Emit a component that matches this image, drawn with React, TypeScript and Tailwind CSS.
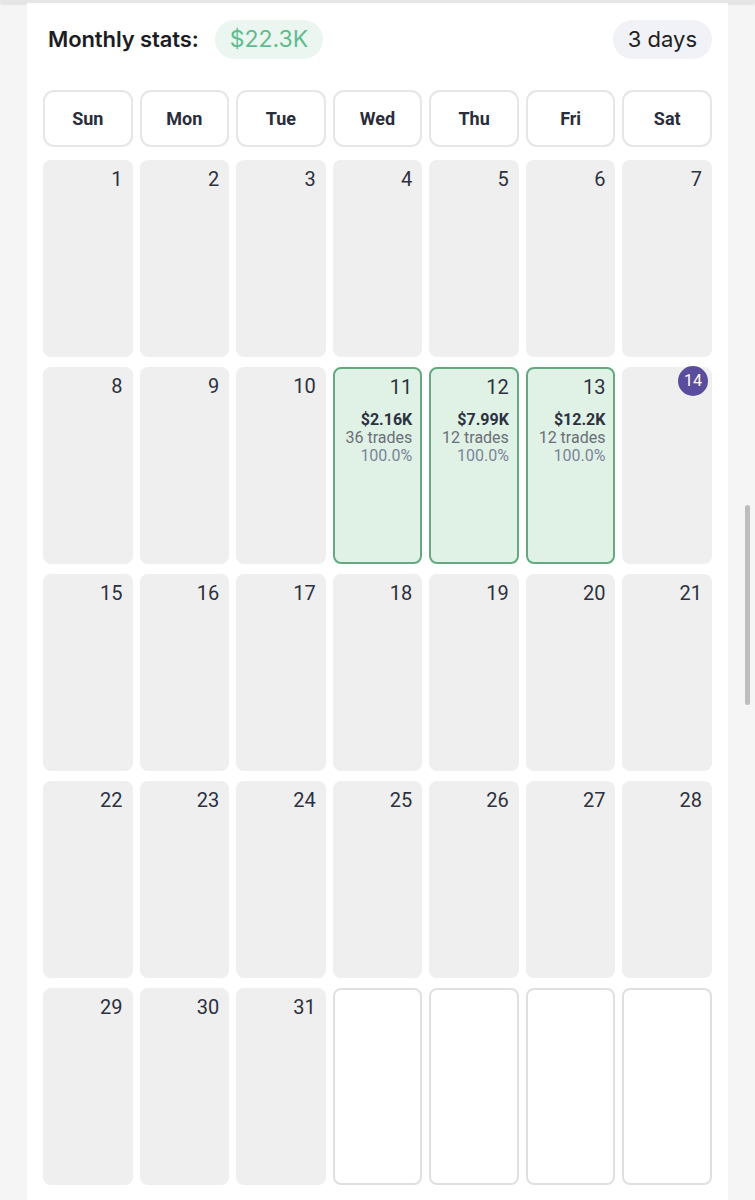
const DAYS = ['Sun', 'Mon', 'Tue', 'Wed', 'Thu', 'Fri', 'Sat']

type Stat = { pnl: string; trades: string; pct: string }

const STATS: Record<number, Stat> = {
  11: { pnl: '$2.16K', trades: '36 trades', pct: '100.0%' },
  12: { pnl: '$7.99K', trades: '12 trades', pct: '100.0%' },
  13: { pnl: '$12.2K', trades: '12 trades', pct: '100.0%' },
}

const TODAY = 14

export default function App() {
  const cells: (number | null)[] = []
  for (let d = 1; d <= 31; d++) cells.push(d)
  while (cells.length < 35) cells.push(null)

  return (
    <div className="relative h-[1200px] overflow-hidden bg-[#f5f5f5] font-['Roboto',sans-serif]">
      {/* top shadow strip */}
      <div className="h-[3px] bg-[#e6e6e6] shadow-[0_1px_3px_rgba(0,0,0,0.12)]" />

      <div className="mx-[27px] h-full bg-white px-4">
        {/* Header */}
        <div className="flex items-center justify-between pt-[17px] font-['Inter',sans-serif]">
          <div className="flex items-center gap-[16px] pl-[5px]">
            <h2 className="text-[22px] font-semibold tracking-[-0.1px] text-[#1c1d24]">Monthly stats:</h2>
            <span className="rounded-full bg-[#eaf6ef] px-[15px] py-[2px] text-[23px] text-[#62bb8f]">$22.3K</span>
          </div>
          <span className="rounded-full bg-[#f1f1f8] px-[15px] py-[3px] text-[22px] text-[#222]">3 days</span>
        </div>

        {/* Weekday labels */}
        <div className="mt-[31px] grid grid-cols-7 gap-x-[7px]">
          {DAYS.map((d) => (
            <div
              key={d}
              className="flex h-[57px] items-center justify-center rounded-[11px] border-2 border-[#e6e6e6] text-[18px] font-bold text-[#2a2d3a]"
            >
              {d}
            </div>
          ))}
        </div>

        {/* Days */}
        <div className="mt-[13px] grid grid-cols-7 gap-x-[7px] gap-y-[10px]">
          {cells.map((d, i) => {
            if (d === null) {
              return <div key={i} className="h-[197px] rounded-[8px] border-2 border-[#e0e0e0] bg-white" />
            }
            const s = STATS[d]
            if (s) {
              return (
                <div
                  key={i}
                  className="flex h-[197px] flex-col items-end rounded-[8px] border-2 border-[#64a982] bg-[#e0f1e6] pr-[8px] pt-[3px] text-right"
                >
                  <span className="text-[20px] text-[#2d3140]">{d}</span>
                  <span className="mt-[9px] text-[16px] font-bold leading-[18px] text-[#2d3140]">{s.pnl}</span>
                  <span className="text-[16px] leading-[18px] text-[#6b6f78]">{s.trades}</span>
                  <span className="text-[16px] leading-[18px] text-[#7a8597]">{s.pct}</span>
                </div>
              )
            }
            return (
              <div key={i} className="flex h-[197px] flex-col items-end rounded-[8px] bg-[#efefef] pr-[10px] pt-[4px]">
                {d === TODAY ? (
                  <span className="-mr-[6px] -mt-[5px] flex h-[30px] w-[30px] items-center justify-center rounded-full bg-[#5a4d9e] text-[16px] text-white">
                    {d}
                  </span>
                ) : (
                  <span className="text-[20px] text-[#2d3140]">{d}</span>
                )}
              </div>
            )
          })}
        </div>
      </div>

      {/* scrollbar thumb */}
      <div className="absolute left-[745px] top-[505px] h-[200px] w-[5px] rounded-full bg-[#bdbdbd]" />
    </div>
  )
}
